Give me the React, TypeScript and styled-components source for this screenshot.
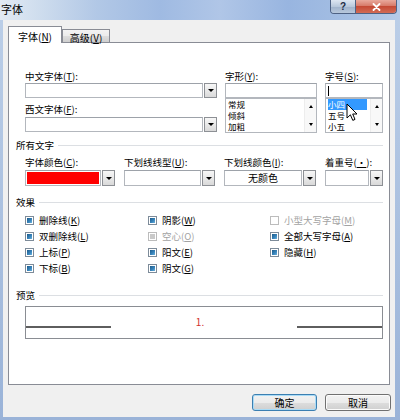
import React from "react";
import styled, { createGlobalStyle } from "styled-components";

const GlobalStyle = createGlobalStyle`
  html, body { margin: 0; padding: 0; }
  body {
    width: 400px; height: 420px; overflow: hidden;
    font-family: "Noto Sans CJK SC", "Liberation Sans", sans-serif;
    color: #000;
  }
  * { box-sizing: border-box; }
`;

const Window = styled.div`
  width: 400px;
  height: 420px;
  display: flex;
  flex-direction: column;
  background: linear-gradient(180deg, #bccfe8 0%, #9ab3d8 100%);
`;

const TitleBar = styled.div`
  height: 20px;
  flex: none;
  display: flex;
  justify-content: space-between;
  align-items: flex-start;
  padding: 0 3px 0 1px;
  background: linear-gradient(90deg, #e2eaf4 0%, #d0deee 9%, #b2c8e6 24%, #9fbae2 40%, #b0c6e7 55%, #98b5e0 72%, #a5bfe3 88%, #b6cbe8 100%);
`;

const TitleText = styled.div`
  font-size: 11px;
  line-height: 12px;
  margin-top: 3px;
`;

const CaptionGroup = styled.div`
  display: flex;
  height: 14px;
  border: 1px solid #4e6284;
  border-top: none;
  border-radius: 0 0 4px 4px;
  overflow: hidden;
`;

const HelpButton = styled.div`
  width: 25px;
  display: flex;
  align-items: center;
  justify-content: center;
  font-family: "Liberation Sans", sans-serif;
  font-weight: bold;
  font-size: 10px;
  color: #1d2c44;
  border-right: 1px solid #4e6284;
  background: linear-gradient(180deg, #dde6f1 0%, #b9c9dc 50%, #9fb2cb 51%, #b8c8dc 100%);
`;

const CloseButton = styled.div`
  width: 40px;
  display: flex;
  align-items: center;
  justify-content: center;
  background: linear-gradient(180deg, #e9a99c 0%, #d77a69 45%, #c54a35 50%, #d26b55 100%);
`;

const Frame = styled.div`
  flex: 1;
  display: flex;
  padding: 0 5px 3px 3px;
`;

const Body = styled.div`
  flex: 1;
  display: flex;
  flex-direction: column;
  background: #f0f0f0;
  padding: 6px 5px 0 5px;
`;

const TabRow = styled.div`
  height: 17px;
  flex: none;
  display: flex;
  align-items: flex-start;
  margin-bottom: -1px;
  position: relative;
  z-index: 1;
`;

const Tab = styled.div<{ $active?: boolean; $w: number }>`
  width: ${(p) => p.$w}px;
  height: ${(p) => (p.$active ? 17 : 13)}px;
  margin-top: ${(p) => (p.$active ? 0 : 3)}px;
  padding-top: ${(p) => (p.$active ? 4 : 2)}px;
  border: 1px solid #898c95;
  border-bottom: none;
  background: ${(p) => (p.$active ? "#fff" : "linear-gradient(180deg, #f3f3f3 0%, #ebebeb 50%, #dddddd 51%, #cfcfcf 100%)")};
  font-size: 10px;
  line-height: 12px;
  text-align: center;
  white-space: nowrap;
`;

const Panel = styled.div`
  flex: 1;
  background: #fff;
  border: 1px solid #898c95;
  display: flex;
  flex-direction: column;
  padding: 27px 6px 0 7px;
`;

const Key = styled.span`
  text-decoration: underline;
  text-underline-offset: 1px;
`;

const TopGrid = styled.div`
  margin-left: 9px;
  display: grid;
  grid-template-columns: 192px 92px 58px;
  column-gap: 8px;
`;

const Column = styled.div`
  display: flex;
  flex-direction: column;
`;

const FieldLabel = styled.div<{ $top?: number; $bottom?: number }>`
  font-size: 9.5px;
  line-height: 12px;
  height: 12px;
  white-space: nowrap;
  margin-top: ${(p) => p.$top ?? 0}px;
  margin-bottom: ${(p) => p.$bottom ?? 1}px;
`;

const Combo = styled.div<{ $h: number }>`
  display: flex;
  height: ${(p) => p.$h}px;
  gap: 1px;
`;

const InputBox = styled.div<{ $center?: boolean }>`
  flex: 1;
  min-width: 0;
  background: #fff;
  border: 1px solid #b3b7bd;
  border-top-color: #9da2a9;
  display: flex;
  align-items: center;
  justify-content: ${(p) => (p.$center ? "center" : "flex-start")};
  padding: 1px;
  font-size: 10px;
  line-height: 12px;
`;

const ColorSwatch = styled.div`
  flex: 1;
  align-self: stretch;
  background: #ff0000;
`;

const Caret = styled.div`
  width: 1px;
  height: 10px;
  margin-left: 1px;
  background: #000;
`;

const DropButton = styled.div`
  width: 13px;
  flex: none;
  display: flex;
  align-items: center;
  justify-content: center;
  border: 1px solid #8d9095;
  background: linear-gradient(180deg, #f7f7f7 0%, #e9e9e9 50%, #d9d9d9 100%);
  &::after {
    content: "";
    width: 0;
    height: 0;
    border-left: 3px solid transparent;
    border-right: 3px solid transparent;
    border-top: 3.5px solid #000;
  }
`;

const ListBox = styled.div`
  height: 35px;
  display: flex;
  background: #fff;
  border: 1px solid #b3b7bd;
  position: relative;
`;

const ListItems = styled.div`
  flex: 1;
  padding-left: 2px;
  display: flex;
  flex-direction: column;
`;

const ListItem = styled.div<{ $selected?: boolean }>`
  height: 11px;
  line-height: 11px;
  font-size: 8.5px;
  white-space: nowrap;
  margin-right: 3px;
  background: ${(p) => (p.$selected ? "#3399ff" : "transparent")};
  color: ${(p) => (p.$selected ? "#fff" : "#000")};
`;

const ScrollBar = styled.div`
  width: 12px;
  flex: none;
  display: flex;
  flex-direction: column;
  align-items: center;
  justify-content: space-between;
  padding: 6px 0 6px;
  background: #f8f8f8;
  border-left: 1px solid #ededed;
`;

const Arrow = styled.div<{ $up?: boolean }>`
  width: 0;
  height: 0;
  border-left: 2.5px solid transparent;
  border-right: 2.5px solid transparent;
  ${(p) => (p.$up ? "border-bottom: 3px solid #000;" : "border-top: 3px solid #000;")}
`;

const Cursor = styled.svg`
  position: absolute;
  left: 20px;
  top: 4px;
`;

const GroupHeader = styled.div<{ $top: number }>`
  display: flex;
  align-items: center;
  gap: 4px;
  height: 12px;
  margin-top: ${(p) => p.$top}px;
  font-size: 9.5px;
  line-height: 12px;
  &::after {
    content: "";
    flex: 1;
    height: 1px;
    background: #dcdfe3;
  }
`;

const FormatGrid = styled.div`
  margin-left: 9px;
  margin-top: 5px;
  display: grid;
  grid-template-columns: 90px 91px 92px 58px;
  column-gap: 9px;
`;

const CheckGrid = styled.div`
  margin-left: 9px;
  margin-top: 4px;
  display: grid;
  grid-template-columns: 123px 122px 1fr;
  grid-template-rows: repeat(4, 16px);
  grid-auto-flow: column;
`;

type BoxState = "mixed" | "mixedDisabled" | "offDisabled";

const CheckRow = styled.div<{ $disabled?: boolean }>`
  display: flex;
  align-items: center;
  gap: 5px;
  font-size: 9.5px;
  line-height: 12px;
  white-space: nowrap;
  color: ${(p) => (p.$disabled ? "#a3a3a3" : "#000")};
`;

const CheckBox = styled.span<{ $state: BoxState }>`
  width: 9px;
  height: 9px;
  flex: none;
  display: flex;
  align-items: center;
  justify-content: center;
  background: #fff;
  border: 1px solid ${(p) => (p.$state === "mixed" ? "#7d8b99" : "#bcbcbc")};
  &::after {
    content: "";
    width: 5px;
    height: 5px;
    background: ${(p) =>
      p.$state === "mixed"
        ? "linear-gradient(135deg, #1b5a8a 0%, #3a86bd 60%, #6cb4de 100%)"
        : p.$state === "mixedDisabled"
        ? "#c9c9c9"
        : "transparent"};
  }
`;

const PreviewBox = styled.div`
  margin-left: 9px;
  margin-top: 5px;
  height: 33px;
  border: 1px solid #8a8d93;
  display: flex;
`;

const PreviewLine = styled.div`
  width: 85px;
  height: 2px;
  align-self: flex-start;
  margin-top: 19px;
  background: #5e5e5e;
`;

const PreviewText = styled.div`
  flex: 1;
  text-align: center;
  padding-top: 9px;
  padding-right: 8px;
  font-size: 10px;
  line-height: 12px;
  color: #d2302e;
`;

const ButtonRow = styled.div`
  height: 32px;
  flex: none;
  display: flex;
  justify-content: flex-end;
  align-items: flex-start;
  gap: 8px;
  padding-top: 9px;
  margin-right: -1px;
`;

const DialogButton = styled.div<{ $default?: boolean }>`
  width: ${(p) => (p.$default ? 65 : 66)}px;
  height: 17px;
  border-radius: 3px;
  border: 1px solid ${(p) => (p.$default ? "#3c7fb1" : "#707070")};
  box-shadow: ${(p) => (p.$default ? "inset 0 0 0 1px #a9dbf6" : "inset 0 0 0 1px #fbfbfb")};
  background: linear-gradient(180deg, #f2f2f2 0%, #ebebeb 50%, #dddddd 51%, #cfcfcf 100%);
  font-size: 10px;
  line-height: 15px;
  text-align: center;
`;

const checks: { label: string; key: string; state: BoxState }[] = [
  { label: "删除线", key: "K", state: "mixed" },
  { label: "双删除线", key: "L", state: "mixed" },
  { label: "上标", key: "P", state: "mixed" },
  { label: "下标", key: "B", state: "mixed" },
  { label: "阴影", key: "W", state: "mixed" },
  { label: "空心", key: "O", state: "mixedDisabled" },
  { label: "阳文", key: "E", state: "mixed" },
  { label: "阴文", key: "G", state: "mixed" },
  { label: "小型大写字母", key: "M", state: "offDisabled" },
  { label: "全部大写字母", key: "A", state: "mixed" },
  { label: "隐藏", key: "H", state: "mixed" },
];

const ScrollArrows = () => (
  <ScrollBar>
    <Arrow $up />
    <Arrow />
  </ScrollBar>
);

export default function App() {
  return (
    <>
      <GlobalStyle />
      <Window>
        <TitleBar>
          <TitleText>字体</TitleText>
          <CaptionGroup>
            <HelpButton>?</HelpButton>
            <CloseButton>
              <svg width="9" height="8" viewBox="0 0 9 8">
                <path d="M1.5 1 L7.5 7 M7.5 1 L1.5 7" stroke="#fff" strokeWidth="1.8" strokeLinecap="round" />
              </svg>
            </CloseButton>
          </CaptionGroup>
        </TitleBar>
        <Frame>
          <Body>
            <TabRow>
              <Tab $active $w={54}>
                字体(<Key>N</Key>)
              </Tab>
              <Tab $w={48}>
                高级(<Key>V</Key>)
              </Tab>
            </TabRow>
            <Panel>
              <TopGrid>
                <Column>
                  <FieldLabel>
                    中文字体(<Key>T</Key>):
                  </FieldLabel>
                  <Combo $h={15}>
                    <InputBox />
                    <DropButton />
                  </Combo>
                  <FieldLabel $top={5} $bottom={2}>
                    西文字体(<Key>F</Key>):
                  </FieldLabel>
                  <Combo $h={15}>
                    <InputBox />
                    <DropButton />
                  </Combo>
                </Column>
                <Column>
                  <FieldLabel>
                    字形(<Key>Y</Key>):
                  </FieldLabel>
                  <Combo $h={15}>
                    <InputBox />
                  </Combo>
                  <ListBox>
                    <ListItems>
                      <ListItem>常规</ListItem>
                      <ListItem>倾斜</ListItem>
                      <ListItem>加粗</ListItem>
                    </ListItems>
                    <ScrollArrows />
                  </ListBox>
                </Column>
                <Column>
                  <FieldLabel>
                    字号(<Key>S</Key>):
                  </FieldLabel>
                  <Combo $h={15}>
                    <InputBox>
                      <Caret />
                    </InputBox>
                  </Combo>
                  <ListBox>
                    <ListItems>
                      <ListItem $selected>小四</ListItem>
                      <ListItem>五号</ListItem>
                      <ListItem>小五</ListItem>
                    </ListItems>
                    <ScrollArrows />
                    <Cursor width="12" height="19" viewBox="0 0 12 19">
                      <path
                        d="M1 1 L1 15 L4.4 11.8 L6.8 17.4 L9 16.4 L6.7 11 L11 11 Z"
                        fill="#fff"
                        stroke="#000"
                        strokeWidth="1"
                        strokeLinejoin="round"
                      />
                    </Cursor>
                  </ListBox>
                </Column>
              </TopGrid>

              <GroupHeader $top={6}>所有文字</GroupHeader>
              <FormatGrid>
                <Column>
                  <FieldLabel $bottom={2}>
                    字体颜色(<Key>C</Key>):
                  </FieldLabel>
                  <Combo $h={16}>
                    <InputBox>
                      <ColorSwatch />
                    </InputBox>
                    <DropButton />
                  </Combo>
                </Column>
                <Column>
                  <FieldLabel $bottom={2}>
                    下划线线型(<Key>U</Key>):
                  </FieldLabel>
                  <Combo $h={16}>
                    <InputBox />
                    <DropButton />
                  </Combo>
                </Column>
                <Column>
                  <FieldLabel $bottom={2}>
                    下划线颜色(<Key>I</Key>):
                  </FieldLabel>
                  <Combo $h={16}>
                    <InputBox $center>无颜色</InputBox>
                    <DropButton />
                  </Combo>
                </Column>
                <Column>
                  <FieldLabel $bottom={2}>
                    着重号(<Key>·</Key>):
                  </FieldLabel>
                  <Combo $h={16}>
                    <InputBox />
                    <DropButton />
                  </Combo>
                </Column>
              </FormatGrid>

              <GroupHeader $top={10}>效果</GroupHeader>
              <CheckGrid>
                {checks.map((c) => (
                  <CheckRow key={c.key} $disabled={c.state !== "mixed"}>
                    <CheckBox $state={c.state} />
                    <span>
                      {c.label}(<Key>{c.key}</Key>)
                    </span>
                  </CheckRow>
                ))}
              </CheckGrid>

              <GroupHeader $top={13}>预览</GroupHeader>
              <PreviewBox>
                <PreviewLine />
                <PreviewText>1.</PreviewText>
                <PreviewLine />
              </PreviewBox>
            </Panel>
            <ButtonRow>
              <DialogButton $default>确定</DialogButton>
              <DialogButton>取消</DialogButton>
            </ButtonRow>
          </Body>
        </Frame>
      </Window>
    </>
  );
}
